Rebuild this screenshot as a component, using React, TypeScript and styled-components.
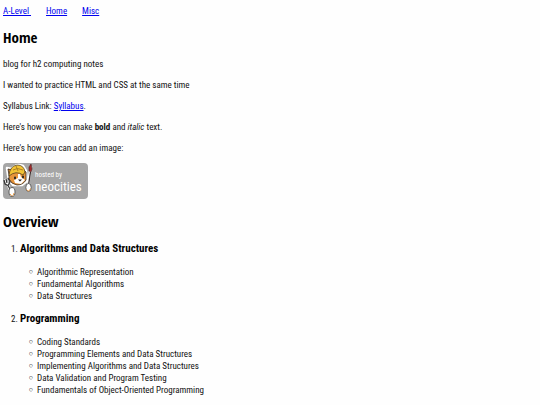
import React from "react";
import styled, { createGlobalStyle } from "styled-components";

const GlobalStyle = createGlobalStyle`
  body {
    margin: 0;
    background-color: #fefefe;
    color: #111;
    font-family: "Roboto Condensed", "DejaVu Sans Condensed", sans-serif;
    font-size: 9px;
    line-height: 12px;
  }
`;

const Page = styled.main`
  padding: 5px 3px 0;
`;

const Nav = styled.nav`
  display: flex;
  gap: 15px;
`;

const Link = styled.a`
  color: #0000ee;
  white-space: pre;
`;

const Title = styled.h2`
  margin: 11px 0 12px;
  font-family: "Open Sans Condensed", "DejaVu Sans Condensed", sans-serif;
  font-size: 15px;
  line-height: 18px;
  color: #000;
`;

const Text = styled.p`
  margin: 9px 0;
`;

const Badge = styled.svg`
  display: block;
  width: 85px;
  height: 36px;
  margin-bottom: 13px;
`;

const Topics = styled.ol`
  margin: 0;
  padding-left: 17px;
`;

const Topic = styled.li`
  margin-bottom: 10px;
`;

const TopicTitle = styled.h3`
  margin: 0 0 10px;
  font-family: "Roboto Condensed", "DejaVu Sans Condensed", sans-serif;
  font-size: 11px;
  line-height: 14px;
  color: #000;
`;

const SubTopics = styled.ul`
  margin: 0;
  padding-left: 17px;
  list-style-type: "◦ ";
`;

const SubTopic = styled.li`
  &::marker {
    font-family: "DejaVu Sans", sans-serif;
    font-weight: bold;
    color: #000;
  }
`;

const topics = [
  {
    title: "Algorithms and Data Structures",
    items: [
      "Algorithmic Representation",
      "Fundamental Algorithms",
      "Data Structures",
    ],
  },
  {
    title: "Programming",
    items: [
      "Coding Standards",
      "Programming Elements and Data Structures",
      "Implementing Algorithms and Data Structures",
      "Data Validation and Program Testing",
      "Fundamentals of Object-Oriented Programming",
    ],
  },
];

const NeocitiesBadge = () => {
  return (
    <Badge viewBox="0 0 85 36" role="img" aria-label="hosted by neocities">
      <rect width="85" height="36" rx="4" fill="#a6a6a6" />
      <g stroke="#fff" strokeWidth="2.5" strokeLinejoin="round" fill="#fff">
        <path d="M5 12 L4 5 L9 6 Q13 0 20 3 L23 8 L24 18 L19 22 L10 22 L6 17 Z" />
        <path d="M2 16 L5 22 L9 31 M28 3 L26 15 L25 26" fill="none" />
      </g>
      <path d="M6 12 L5 6 L9 7 L19 6 L23 9 L23 17 Q20 22 14 22 Q8 21 6 16 Z" fill="#e8953a" stroke="#332519" strokeWidth=".8" />
      <path d="M15 11 L17 11 L18 14 L22 17 L18 21 L12 20 L11 17 L15 15 Z" fill="#fff" />
      <path d="M6 12 Q7 3 14 2 Q21 2 22 9 L20 12 Q13 7 6 13 Z" fill="#f2c335" stroke="#42331c" strokeWidth=".7" />
      <path d="M10 7 Q14 4 20 7 M13 3 L15 8" stroke="#9b711e" strokeWidth=".8" fill="none" />
      <ellipse cx="12" cy="15" rx="1" ry="1.4" fill="#222" />
      <ellipse cx="20" cy="14" rx="1" ry="1.4" fill="#222" />
      <path d="M15 16.5 L19 16.5 L17 18.5 Z" fill="#282020" />
      <path d="M1 17 L2 21 L5 22.5 L8 28 M5 15 L7 19 L5 22.5 M3 16 L4 20" stroke="#333" strokeWidth="1.2" fill="none" />
      <path d="M27.5 9 L25.5 22" stroke="#3b3030" strokeWidth="1.3" />
      <path d="M26 8 L26 4 L28 1 L29 6 L28 9 Z" fill="#a52a2a" stroke="#442020" strokeWidth=".6" />
      <ellipse cx="9" cy="29" rx="3" ry="4.5" fill="#fff" stroke="#444" strokeWidth=".8" />
      <ellipse cx="25.5" cy="24.5" rx="2.7" ry="4" fill="#fff" stroke="#444" strokeWidth=".8" />
      <path d="M7 31 Q10 35 11 30 M23.5 26.5 Q26 30 27.5 25.5" stroke="#e8953a" strokeWidth=".9" fill="none" />
      <text x="32" y="14" fill="#fff" fontFamily="'Roboto Condensed', sans-serif" fontSize="7">
        hosted by
      </text>
      <text x="32" y="28" fill="#fff" fontFamily="'Roboto Condensed', sans-serif" fontSize="13">
        neocities
      </text>
    </Badge>
  );
};

const App = () => {
  return (
    <Page>
      <GlobalStyle />
      <Nav>
        <Link href="#a-level">{"A-Level "}</Link>
        <Link href="#home">Home</Link>
        <Link href="#misc">Misc</Link>
      </Nav>
      <Title>Home</Title>
      <Text>blog for h2 computing notes</Text>
      <Text>I wanted to practice HTML and CSS at the same time</Text>
      <Text>
        Syllabus Link: <Link href="#syllabus">Syllabus</Link>.
      </Text>
      <Text>
        Here's how you can make <strong>bold</strong> and <em>italic</em> text.
      </Text>
      <Text>Here's how you can add an image:</Text>
      <NeocitiesBadge />
      <Title>Overview</Title>
      <Topics>
        {topics.map((topic) => (
          <Topic key={topic.title}>
            <TopicTitle>{topic.title}</TopicTitle>
            <SubTopics>
              {topic.items.map((item) => (
                <SubTopic key={item}>{item}</SubTopic>
              ))}
            </SubTopics>
          </Topic>
        ))}
      </Topics>
    </Page>
  );
};

export default App;
